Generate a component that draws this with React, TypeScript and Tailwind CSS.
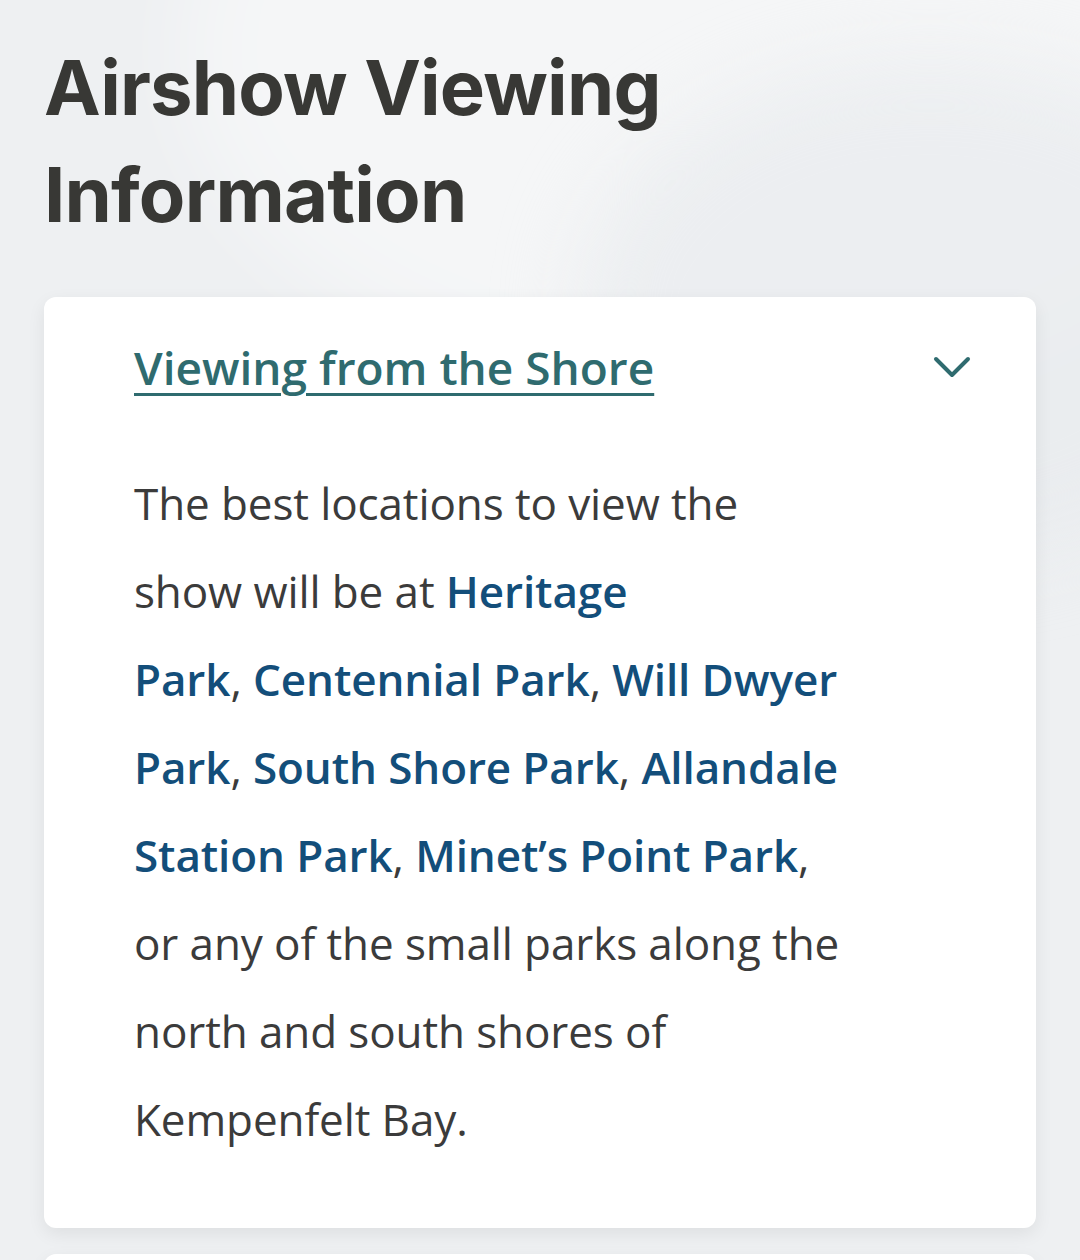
export default function App() {
  return (
    <div className="relative min-h-[1260px] overflow-hidden bg-[#eef0f2] px-[44px] pt-[34px]" style={{ fontFamily: '"Open Sans", sans-serif' }}>
      {/* soft background waves */}
      <div className="pointer-events-none absolute inset-0 overflow-hidden">
        <div className="absolute -top-[300px] left-[180px] h-[700px] w-[1100px] rounded-[50%] bg-white/40 blur-2xl" />
        <div className="absolute top-[60px] -right-[200px] h-[500px] w-[700px] rounded-[50%] bg-[#e8ebee]/70 blur-2xl" />
      </div>

      <div className="relative">
        <h1 className="text-[76px] font-bold leading-[107px] tracking-[-0.8px] text-[#383835]" style={{ fontFamily: 'Inter, sans-serif' }}>
          Airshow Viewing
          <br />
          Information
        </h1>

        <div className="mt-[49px] rounded-xl bg-white pb-[65px] pl-[90px] pr-[60px] pt-[40px] shadow-[0_6px_18px_rgba(0,0,0,0.07)]">
          <div className="flex items-center justify-between">
            <a className="text-[46px] font-semibold leading-[60px] text-[#2f6b6f] underline decoration-[3px] underline-offset-[8px] [font-stretch:92%]">
              Viewing from the Shore
            </a>
            <svg width="40" height="26" viewBox="0 0 40 26" fill="none" className="mr-[4px]">
              <path d="M4 5 L20 21 L36 5" stroke="#2f6b6f" strokeWidth="4" strokeLinecap="round" strokeLinejoin="round" />
            </svg>
          </div>

          <p className="mt-[62px] max-w-[712px] text-[44px] leading-[88px] tracking-[-0.1px] text-[#3b3b3b]">
            The best locations to view the show will be at{" "}
            <a className="font-semibold text-[#134e7a]">
              Heritage
              <br />
              Park
            </a>
            ,{" "}
            <a className="font-semibold text-[#134e7a]">Centennial Park</a>,{" "}
            <a className="font-semibold text-[#134e7a]">Will Dwyer Park</a>,{" "}
            <a className="font-semibold text-[#134e7a]">South Shore Park</a>,{" "}
            <a className="font-semibold text-[#134e7a]">Allandale Station Park</a>,{" "}
            <a className="font-semibold text-[#134e7a]">Minet’s Point Park</a>, or any of the small parks along the north and south shores of Kempenfelt Bay.
          </p>
        </div>

        <div className="mt-[26px] h-[40px] rounded-t-xl bg-white shadow-[0_6px_18px_rgba(0,0,0,0.07)]" />
      </div>
    </div>
  );
}
